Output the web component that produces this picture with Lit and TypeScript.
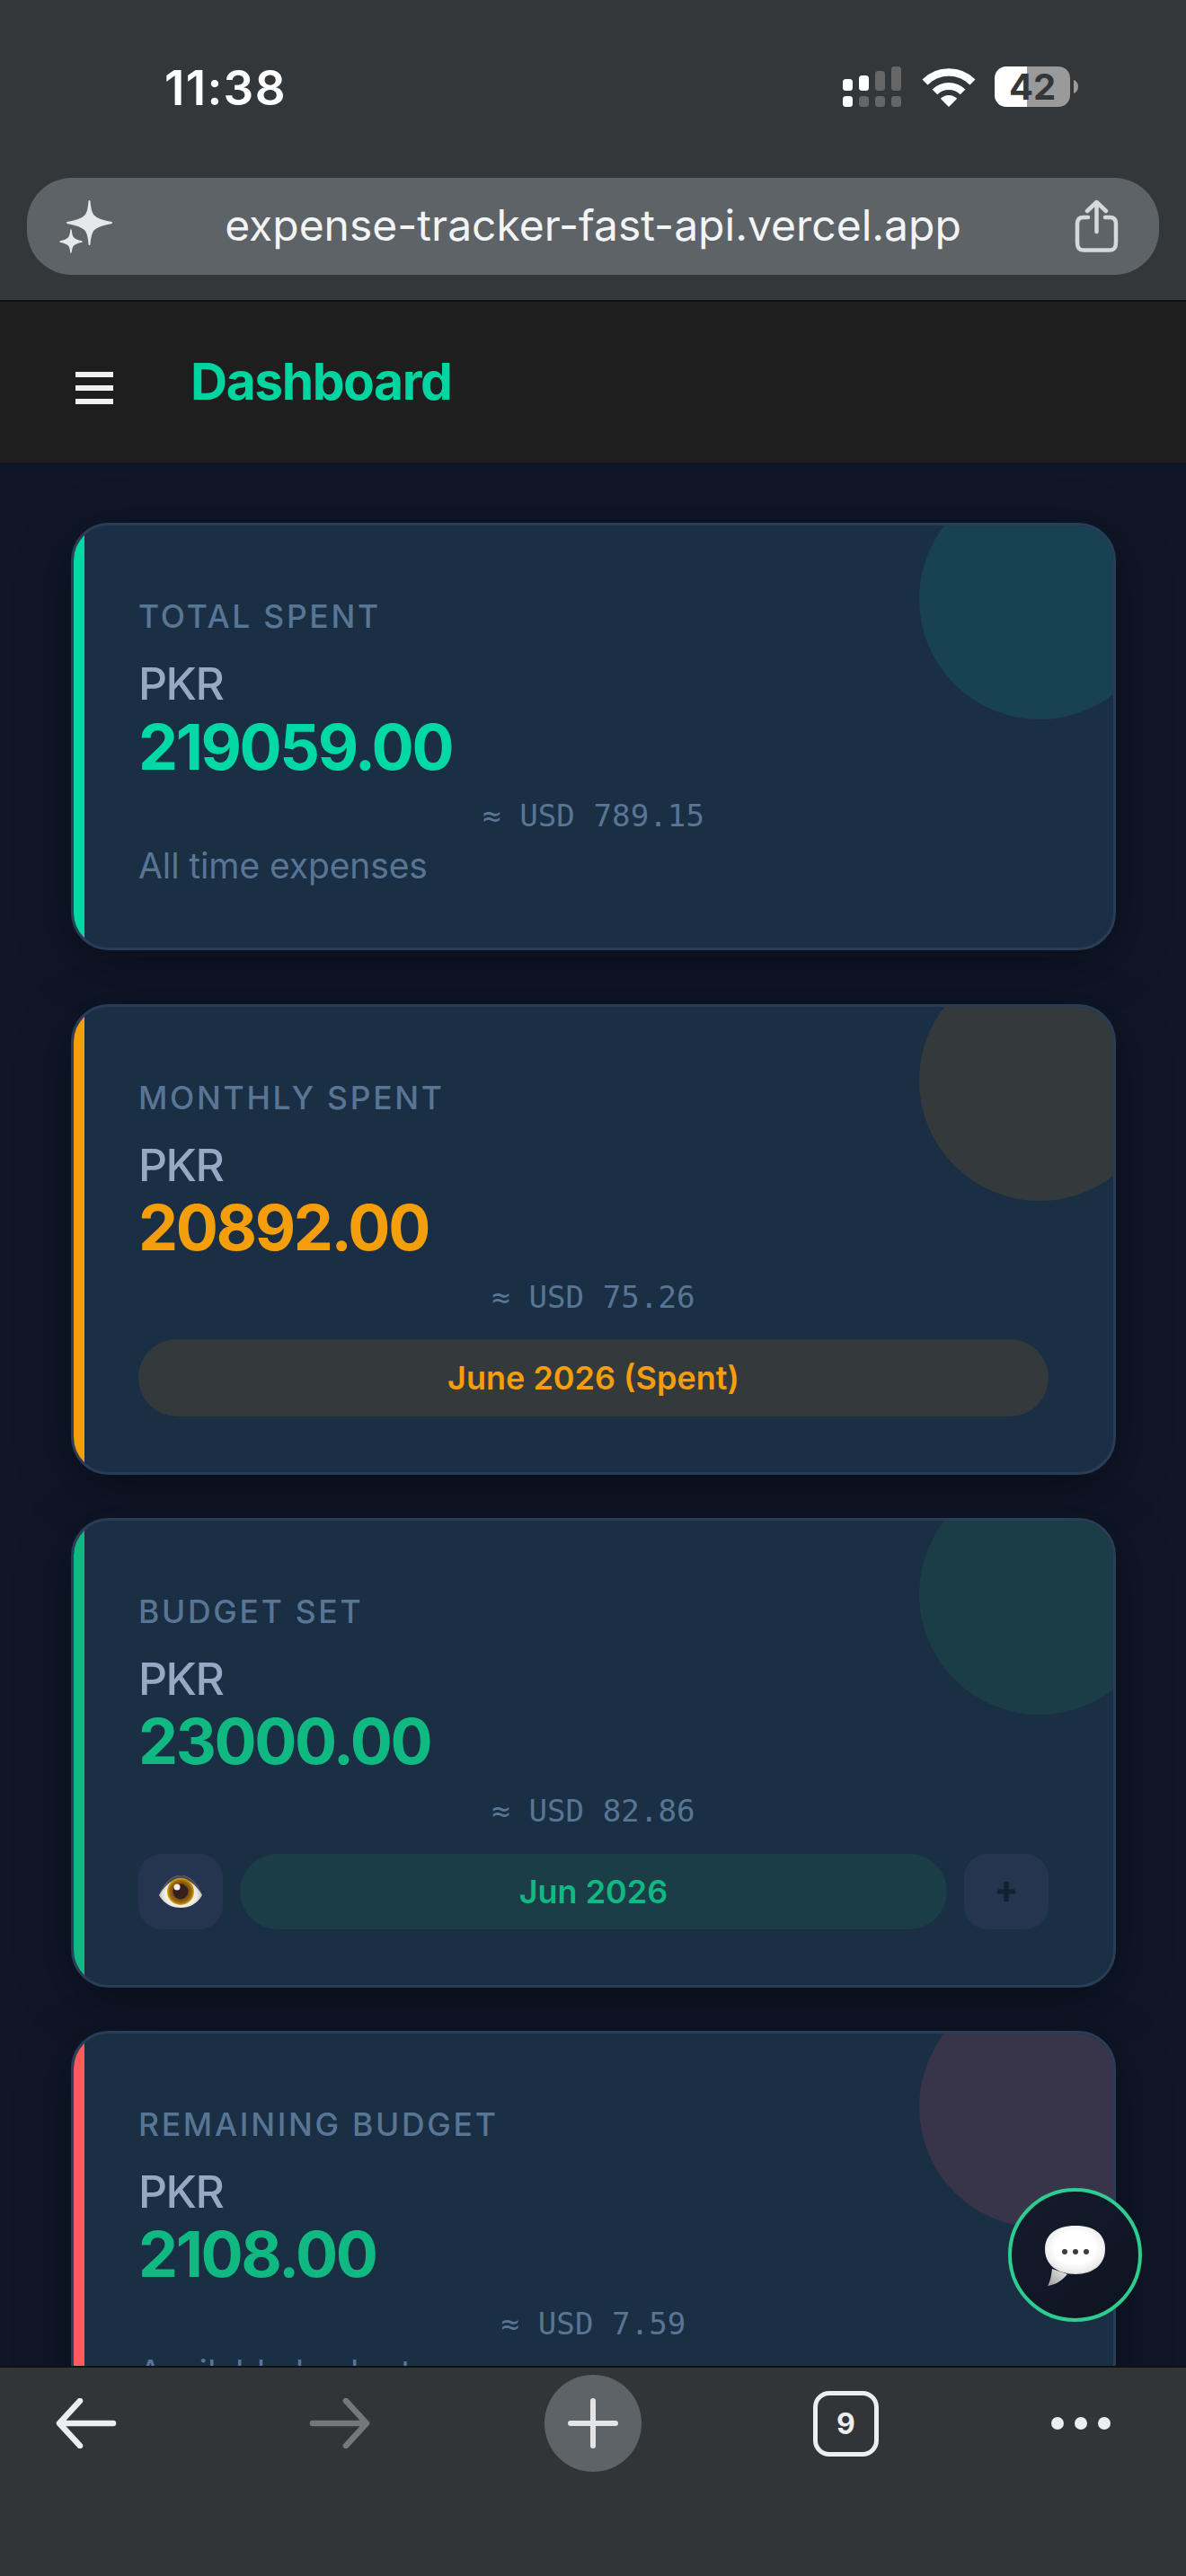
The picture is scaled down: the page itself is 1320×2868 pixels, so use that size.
import { LitElement, html, css, svg } from "lit";
import { customElement } from "lit/decorators.js";

interface Card { cls: string; label: string; amount: string; usd: string; }

const cards: Card[] = [
  { cls: "total", label: "TOTAL SPENT", amount: "219059.00", usd: "≈ USD 789.15" },
  { cls: "monthly", label: "MONTHLY SPENT", amount: "20892.00", usd: "≈ USD 75.26" },
  { cls: "budget", label: "BUDGET SET", amount: "23000.00", usd: "≈ USD 82.86" },
  { cls: "remaining", label: "REMAINING BUDGET", amount: "2108.00", usd: "≈ USD 7.59" },
];

@customElement("app-root")
export class AppRoot extends LitElement {
  static styles = css`
    :host { display: block; width: 1320px; height: 2868px; position: relative; overflow: hidden; font-family: Inter, "Liberation Sans", sans-serif; }
    .page { height: 2868px; display: flex; flex-direction: column; background: #0f1627; }

    .chrome { background: #34373a; height: 336px; box-sizing: border-box; border-bottom: 2px solid #111; flex: none; }
    .status { height: 198px; box-sizing: border-box; position: relative; display: flex; align-items: flex-start; justify-content: space-between; padding: 68px 120px 0 183px; }
    .time { font-size: 53px; line-height: 60px; font-weight: 600; color: #fff; letter-spacing: 1.3px; }
    .sys { display: flex; align-items: flex-start; padding-top: 6px; }
    .signal { width: 66px; height: 45px; margin-right: 22px; }
    .wifi { width: 60px; height: 44px; margin-right: 21px; margin-top: 1px; }
    .battery { width: 93px; height: 45px; position: relative; display: block; }
    .battery-num { position: absolute; left: 0; top: 0; width: 84px; height: 45px; display: flex; align-items: center; justify-content: center; color: #34373a; font-size: 40px; font-weight: 700; letter-spacing: 0; }

    .address { margin: 0 30px; height: 108px; border-radius: 50px; background: #5e6367; display: grid; grid-template-columns: 1fr auto 1fr; align-items: center; }
    .spark { width: 70px; height: 65px; margin-left: 30px; }
    .url { color: #f3f4f5; font-size: 48px; letter-spacing: 0; line-height: 60px; margin-top: -2px; }
    .share { width: 51px; height: 60px; justify-self: end; margin-right: 44px; }

    .top { background: #1e1e1e; height: 179px; flex: none; display: flex; align-items: flex-start; padding: 0 0 0 84px; box-sizing: border-box; }
    .burger { width: 42px; display: flex; flex-direction: column; gap: 9px; margin-top: 78px; }
    .burger i { display: block; height: 6px; background: #f0f0f0; }
    .title { margin: 54px 0 0 86px; color: #00d4a0; font-size: 57px; line-height: 70px; font-weight: 700; letter-spacing: -1.5px; }

    .content { flex: 1; min-height: 0; overflow: hidden; padding: 67px 78px 0 79px; }
    .list { display: flex; flex-direction: column; gap: 48px; }
    .card { position: relative; overflow: hidden; box-sizing: border-box; border: 3px solid #2a3d57; border-radius: 42px; background: #1a2e44; padding: 60px 72px 62px 72px; box-shadow: 0 14px 60px rgba(0, 0, 0, 0.35); }
    .card.total { margin-bottom: 12px; padding-bottom: 67px; --c: #00d9a6; --a: #00d9a6; --blob: #18424f; }
    .card.monthly { --c: #f59e0b; --a: #f59e0b; --blob: #343a3b; }
    .card.budget { --c: #10b981; --a: #10b981; --blob: #1a3d47; }
    .card.remaining { --c: #10b981; --a: #ff5a5f; --blob: #38344a; }
    .card::before { content: ""; position: absolute; left: 0; top: 0; bottom: 0; width: 12px; background: var(--a); }
    .card::after { content: ""; position: absolute; top: -52px; right: -52px; width: 268px; height: 268px; border-radius: 50%; background: var(--blob); }
    .card > * { position: relative; z-index: 1; }

    .label { font-size: 35.5px; line-height: 54px; font-weight: 500; letter-spacing: 2.7px; color: #587694; margin-top: 15px; }
    .ccy { font-size: 50px; line-height: 60px; font-weight: 500; letter-spacing: -1.5px; color: #94a9c2; margin-top: 17px; }
    .amt { font-size: 70px; line-height: 84px; font-weight: 700; color: var(--c); letter-spacing: -2.4px; margin-top: -1.5px; }
    .usd { font-family: "DejaVu Sans Mono", "Liberation Mono", monospace; font-size: 34.2px; line-height: 42px; color: #587694; text-align: center; margin-top: 13.5px; }
    .note { font-size: 39px; line-height: 48px; color: #587694; margin-top: 10.5px; letter-spacing: -0.1px; }
    .pill { height: 86px; border-radius: 43px; background: #343a3b; color: #f59e0b; font-size: 36px; font-weight: 600; display: flex; align-items: center; justify-content: center; margin-top: 26px; }
    .ctrls { display: flex; gap: 19px; height: 84px; margin-top: 27px; }
    .btn { width: 94px; height: 84px; border-radius: 26px; background: #25344f; display: flex; align-items: center; justify-content: center; flex: none; }
    .ctrl-pill { flex: 1; border-radius: 42px; background: #1a3d47; color: #10b981; font-size: 36px; font-weight: 600; display: flex; align-items: center; justify-content: center; }
    .eye { width: 50px; height: 38px; }
    .plus { width: 20px; height: 22px; }

    .fab { position: absolute; left: 1122px; top: 2436px; width: 149px; height: 149px; box-sizing: border-box; border: 4.5px solid #2ecc91; border-radius: 50%; background: linear-gradient(135deg, #141c2d, #0d1320); display: flex; align-items: center; justify-content: center; z-index: 5; }
    .bubble { width: 72px; height: 72px; margin-top: 2px; }

    .bottom { flex: none; height: 234px; box-sizing: border-box; background: #323538; border-top: 2px solid #111; padding-top: 8px; position: relative; z-index: 3; display: grid; grid-template-columns: 191px 374px 190px 373px 150px; grid-template-rows: 108px; align-items: center; justify-items: center; }
    .arrow { width: 68px; height: 56px; }
    .newtab { width: 108px; height: 108px; border-radius: 50%; background: #5e6367; display: flex; align-items: center; justify-content: center; }
    .newtab svg { width: 56px; height: 56px; }
    .tabs { width: 73px; height: 73px; box-sizing: border-box; border: 5.5px solid #eceeef; border-radius: 18px; display: flex; align-items: center; justify-content: center; color: #eceeef; font-size: 32px; font-weight: 700; }
    .dots { display: flex; gap: 12px; }
    .dots i { display: block; width: 14px; height: 14px; border-radius: 50%; background: #eceeef; }
  `;

  private signal() {
    const bar = (x: number, y: number, h: number, c: string) => svg`<rect x=${x} y=${y} width="11" height=${h} rx="3.5" fill=${c}></rect>`;
    return html`<svg class="signal" viewBox="0 0 66 45">
      ${bar(0, 14, 13, "#fff")}${bar(18, 10, 17, "#fff")}${bar(36, 5, 22, "#666")}${bar(54, 0, 27, "#666")}
      ${bar(0, 33, 12, "#fff")}${bar(18, 33, 12, "#666")}${bar(36, 33, 12, "#666")}${bar(54, 33, 12, "#666")}
    </svg>`;
  }

  private wifi() {
    return html`<svg class="wifi" viewBox="0 0 60 44" fill="none" stroke="#fff">
      <path d="M3.5 16.5A37.5 37.5 0 0 1 56.5 16.5" stroke-width="8.5"></path>
      <path d="M14.4 27.4A22 22 0 0 1 45.6 27.4" stroke-width="8"></path>
      <path d="M30 44L20.8 34.8A13 13 0 0 1 39.2 34.8Z" fill="#fff" stroke="none"></path>
    </svg>`;
  }

  private battery() {
    return html`<div class="battery">
      <svg width="93" height="45" viewBox="0 0 93 45">
        <defs><clipPath id="batclip"><rect x="0" y="0" width="84" height="45" rx="13"></rect></clipPath></defs>
        <g clip-path="url(#batclip)"><rect width="36" height="45" fill="#fff"></rect><rect x="36" width="48" height="45" fill="#9a9a9a"></rect></g>
        <path d="M88 15c3 1 5 4 5 7.500s-2 6.500-5 7.500Z" fill="#9a9a9a"></path>
      </svg>
      <span class="battery-num">42</span>
    </div>`;
  }

  private card(c: Card) {
    return html`<section class="card ${c.cls}">
      <div class="label">${c.label}</div>
      <div class="ccy">PKR</div>
      <div class="amt">${c.amount}</div>
      <div class="usd">${c.usd}</div>
      ${c.cls === "total" ? html`<div class="note">All time expenses</div>` : ""}
      ${c.cls === "remaining" ? html`<div class="note">Available budget</div>` : ""}
      ${c.cls === "monthly" ? html`<div class="pill">June 2026 (Spent)</div>` : ""}
      ${c.cls === "budget" ? html`<div class="ctrls">
        <div class="btn">
          <svg class="eye" viewBox="0 0 50 38">
            <defs>
              <radialGradient id="sclera" cx="50%" cy="60%" r="60%"><stop offset="0.6" stop-color="#f2eeea"></stop><stop offset="1" stop-color="#a9a5a6"></stop></radialGradient>
              <radialGradient id="iris" cx="50%" cy="50%" r="50%"><stop offset="0.45" stop-color="#6a3d14"></stop><stop offset="0.82" stop-color="#9b6a0c"></stop><stop offset="1" stop-color="#d9a90f"></stop></radialGradient>
            </defs>
            <path d="M1 23C7 9 15 1 25 1S43 9 49 23C43 33 35 37 25 37S7 33 1 23Z" fill="url(#sclera)"></path>
            <path d="M1 23C7 9 15 1 25 1S43 9 49 23C42 11 34 5 25 5S8 11 1 23Z" fill="#4a4a50"></path>
            <circle cx="25" cy="19" r="15" fill="url(#iris)"></circle>
            <circle cx="25" cy="19" r="8.500" fill="#33201f"></circle>
            <circle cx="21" cy="14" r="3.500" fill="#f4eeee"></circle>
          </svg>
        </div>
        <div class="ctrl-pill">Jun 2026</div>
        <div class="btn"><svg class="plus" viewBox="0 0 20 22"><path d="M7.500 0h5v8.500H20v5h-7.500V22h-5v-8.500H0v-5h7.500Z" fill="#12202f"></path></svg></div>
      </div>` : ""}
    </section>`;
  }

  render() {
    return html`<div class="page">
      <div class="chrome">
        <div class="status">
          <div class="time">11:38</div>
          <div class="sys">${this.signal()}${this.wifi()}${this.battery()}</div>
        </div>
        <div class="address">
          <svg class="spark" viewBox="0 0 70 65" fill="#e5e9ec">
            <path d="M39.500 4C40.500 19 42 24 64 28C42 32 40.500 37 39.500 52C38.500 37 37 32 15 28C37 24 38.500 19 39.500 4Z" stroke="#e5e9ec" stroke-width="2" stroke-linejoin="round"></path>
            <path d="M19 36C19.600 44 21 47 31 49C21 51 19.600 54 19 61C18.400 54 17 51 7 49C17 47 18.400 44 19 36Z" stroke="#e5e9ec" stroke-width="1.500" stroke-linejoin="round"></path>
          </svg>
          <div class="url">expense-tracker-fast-api.vercel.app</div>
          <svg class="share" viewBox="0 0 51 60" fill="none" stroke="#d5d9dc" stroke-width="4.500" stroke-linecap="round" stroke-linejoin="round">
            <path d="M25.500 36V3M15 13L25.500 3L36 13"></path>
            <path d="M16 20H11C6 20 4 22.500 4 27V48C4 54 6 56.500 11 56.500H40C45 56.500 47 54 47 48V27C47 22.500 45 20 40 20H35"></path>
          </svg>
        </div>
      </div>
      <div class="top">
        <div class="burger"><i></i><i></i><i></i></div>
        <div class="title">Dashboard</div>
      </div>
      <div class="content">
        <div class="list">${cards.map((c) => this.card(c))}</div>
      </div>
      <div class="bottom">
        <svg class="arrow" viewBox="0 0 68 56" fill="none" stroke="#eceeef" stroke-width="6.500" stroke-linecap="round" stroke-linejoin="round"><path d="M64 28H5M27 3L4 28L27 53"></path></svg>
        <svg class="arrow" viewBox="0 0 68 56" fill="none" stroke="#757779" stroke-width="6.500" stroke-linecap="round" stroke-linejoin="round"><path d="M4 28H63M41 3L64 28L41 53"></path></svg>
        <div class="newtab"><svg viewBox="0 0 56 56" fill="none" stroke="#e2e4e6" stroke-width="6" stroke-linecap="round"><path d="M28 3V53M3 28H53"></path></svg></div>
        <div class="tabs">9</div>
        <div class="dots"><i></i><i></i><i></i></div>
      </div>
      <div class="fab">
        <svg class="bubble" viewBox="0 0 72 72">
          <defs>
            <radialGradient id="bub" cx="50%" cy="45%" r="60%"><stop offset="0.55" stop-color="#ffffff"></stop><stop offset="0.85" stop-color="#ececec"></stop><stop offset="1" stop-color="#bdbdbd"></stop></radialGradient>
            <linearGradient id="tail" x1="0" y1="1" x2="1" y2="0"><stop offset="0" stop-color="#9a9a9a"></stop><stop offset="1" stop-color="#eeeeee"></stop></linearGradient>
          </defs>
          <path d="M10 50C9 58 8 64 5 69C13 68 20 64 27 56Z" fill="url(#tail)"></path>
          <path d="M36 2C58 2 69 12 69 28C69 45 56 56 36 56C15 56 2 45 2 28C2 12 14 2 36 2Z" fill="url(#bub)"></path>
          <circle cx="24" cy="31" r="3" fill="#3c3c40"></circle><circle cx="36" cy="31" r="3" fill="#3c3c40"></circle><circle cx="48" cy="31" r="3" fill="#3c3c40"></circle>
        </svg>
      </div>
    </div>`;
  }
}
